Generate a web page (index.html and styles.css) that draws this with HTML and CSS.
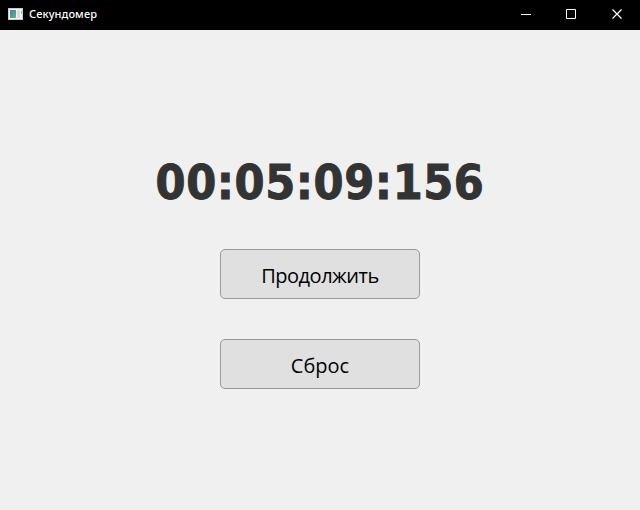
FILE: index.html
```html
<!DOCTYPE html>
<html lang="ru">
<head>
<meta charset="utf-8">
<title>Секундомер</title>
<link rel="stylesheet" href="styles.css">
</head>
<body>
<header class="titlebar">
  <svg class="app-icon" width="15" height="12" viewBox="0 0 15 12">
    <defs>
      <linearGradient id="pane" x1="0" y1="0" x2="1" y2="1"><stop stop-color="#4a7fae"/><stop offset="1" stop-color="#62b58a"/></linearGradient>
    </defs>
    <path fill="#c9cccd" d="M0 0h15v12H0z"/>
    <path fill="#f3f3f3" d="M1 1h13v10H1z"/>
    <path fill="url(#pane)" d="M2 2h6v8H2z"/>
    <path fill="#dcdcdc" d="M9 2h3v8H9z"/>
    <path fill="#8fbfa5" d="M13 3h1v3h-1z"/>
  </svg>
  <span class="title">Секундомер</span>
  <div class="controls">
    <svg width="10" height="11" viewBox="0 0 10 11"><path d="M0 5.500h10"/></svg>
    <svg width="11" height="11" viewBox="0 0 11 11"><path d="M.5 .5h9v9h-9z"/></svg>
    <svg width="11" height="11" viewBox="0 0 11 11"><path stroke-width="1.200" d="M.5 .5l9 9M9.500 .5l-9 9"/></svg>
  </div>
</header>
<main class="content">
  <div class="time">00:05:09:156</div>
  <button class="button button-resume">Продолжить</button>
  <button class="button">Сброс</button>
</main>
</body>
</html>
```

FILE: styles.css
```css
body {
  margin: 0;
  height: 510px;
  background: #f0f0f0;
  overflow: hidden;
}
.titlebar {
  display: flex;
  align-items: center;
  box-sizing: border-box;
  height: 30px;
  padding: 0 17px 2px 8px;
  background: #000;
  color: #fff;
}
.title {
  margin-left: 6px;
  font: 500 11px/16px "Noto Sans", sans-serif;
  letter-spacing: 0.1px;
}
.controls {
  display: flex;
  gap: 35px;
  margin-left: auto;
  fill: none;
  stroke: #fff;
}
.content {
  display: flex;
  flex-direction: column;
  align-items: center;
  padding-top: 120px;
}
.time {
  height: 64px;
  margin-bottom: 35px;
  color: #333;
  font: bold 48px/64px "DejaVu Sans Condensed", "DejaVu Sans", sans-serif;
  letter-spacing: 0.550px;
  -webkit-text-stroke: 0.900px #333;
}
.button {
  box-sizing: border-box;
  width: 200px;
  height: 50px;
  margin-bottom: 40px;
  padding: 3px 0 0;
  border: 1px solid #999;
  border-radius: 5px;
  background: #e0e0e0;
  color: #000;
  font: 20px/27px "Open Sans", "Noto Sans", sans-serif;
}
.button-resume {
  letter-spacing: -0.500px;
}
```
